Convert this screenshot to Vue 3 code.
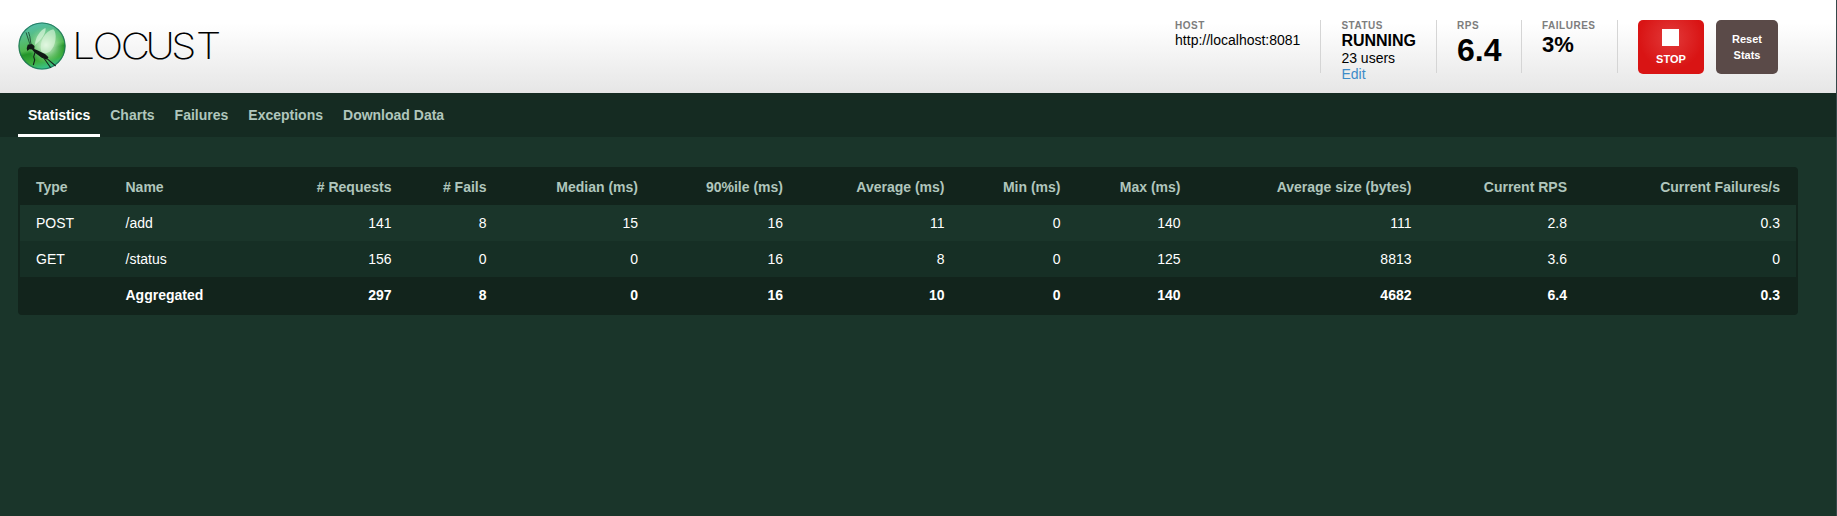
<script setup>
const tabs = ['Statistics', 'Charts', 'Failures', 'Exceptions', 'Download Data']
const columns = [
  ['Type', 89.5], ['Name', 140], ['# Requests', 158], ['# Fails', 95], ['Median (ms)', 151.5],
  ['90%ile (ms)', 145], ['Average (ms)', 161.5], ['Min (ms)', 116], ['Max (ms)', 120],
  ['Average size (bytes)', 231], ['Current RPS', 155.5], ['Current Failures/s', 213]
]
const rows = [
  ['POST', '/add', '141', '8', '15', '16', '11', '0', '140', '111', '2.8', '0.3'],
  ['GET', '/status', '156', '0', '0', '16', '8', '0', '125', '8813', '3.6', '0'],
  ['', 'Aggregated', '297', '8', '0', '16', '10', '0', '140', '4682', '6.4', '0.3']
]
</script>

<template>
  <div class="page">
    <header class="top">
      <svg class="logo" width="204" height="52" viewBox="0 0 204 52">
        <defs>
          <linearGradient id="ball" x1="0.35" y1="0" x2="0.6" y2="1">
            <stop offset="0" stop-color="#52bfae" />
            <stop offset="0.25" stop-color="#57bd83" />
            <stop offset="0.52" stop-color="#4fb64e" />
            <stop offset="0.6" stop-color="#239429" />
            <stop offset="0.8" stop-color="#3fae3f" />
            <stop offset="1" stop-color="#36c79c" />
          </linearGradient>
          <radialGradient id="glow">
            <stop offset="0" stop-color="#e8f8e6" stop-opacity="1" />
            <stop offset="0.5" stop-color="#b5e6b8" stop-opacity="0.7" />
            <stop offset="1" stop-color="#8ad890" stop-opacity="0" />
          </radialGradient>
        </defs>
        <circle cx="24" cy="26" r="23.500" fill="url(#ball)" />
        <circle cx="28" cy="25" r="18" fill="url(#glow)" />
        <circle cx="24" cy="26" r="23" fill="none" stroke="#1c6f58" stroke-width="1.200" opacity="0.8" />
        <path d="M17 25C17 18 22 10 27.500 8C28.500 13 23 20 17 25Z" fill="#d8f5dc" opacity="0.7" />
        <path d="M23 31C21 22 27 11 35.300 9.300C39.500 13 38 26 32 31.500C28 34 25 34 23 31Z" fill="#dff6e0" opacity="0.6" />
        <path d="M8.700 28.300L9.700 24.700L13.700 23.700L16.500 26L16.300 29L19.300 30.200L27 34L30.500 37.300L28.700 39.500L23.700 37.800L16.300 32.300L14 29.500L11.300 29.300L9.300 31Z" fill="#111815" />
        <path d="M12 24.500L8 12.300M13 24.500L11.800 16.500L10.500 12" fill="none" stroke="#1f4935" stroke-width="0.900" />
        <path d="M17 32.500L15.700 36.700L16.700 40L15.300 45M25.300 37.300L32.700 47.700M28.700 38.300L37.700 46" fill="none" stroke="#15231c" stroke-width="1.100" />
        <text class="wordmark" transform="scale(1.12 1)" x="48.400 66.800 91.800 113.900 136.900 158.900" y="39">LOCUST</text>
      </svg>
      <div class="stats">
        <div class="box"><div class="label">HOST</div><div class="value">http://localhost:8081</div></div>
        <div class="box"><div class="label">STATUS</div><div class="value running">RUNNING</div><div class="value users">23 users</div><a class="edit">Edit</a></div>
        <div class="box rate"><div class="label">RPS</div><div class="value rps">6.4</div></div>
        <div class="box last"><div class="label">FAILURES</div><div class="value fail">3%</div></div>
        <button class="stop"><span class="square"></span>STOP</button>
        <button class="reset">Reset<br />Stats</button>
      </div>
    </header>
    <nav class="tabs">
      <a v-for="(t, i) in tabs" :key="t" :class="{ active: i === 0 }">{{ t }}</a>
    </nav>
    <main>
      <table>
        <colgroup><col v-for="c in columns" :key="c[0]" :style="{ width: c[1] + 'px' }" /></colgroup>
        <thead><tr><th v-for="c in columns" :key="c[0]">{{ c[0] }}</th></tr></thead>
        <tbody>
          <tr v-for="(r, i) in rows" :key="i" :class="{ even: i === 1, total: i === 2 }">
            <td v-for="(v, j) in r" :key="j">{{ v }}</td>
          </tr>
        </tbody>
      </table>
    </main>
  </div>
</template>

<style>
body { margin: 0; background: #1a352a; }
</style>

<style scoped>
.page { box-sizing: border-box; height: 516px; overflow: hidden; background: #1a352a; border-right: 1px solid #36484a; font-family: "Liberation Sans", Arial, sans-serif; font-size: 14px; color: #fff; }
.top { box-sizing: border-box; height: 93px; padding: 20px 58px 0 18px; display: flex; justify-content: space-between; background: linear-gradient(#fff 0, #fff 25%, #e6e6e6 100%); color: #000; }
.logo { display: block; flex: none; }
.wordmark { font-family: Inter, sans-serif; font-weight: 200; font-size: 36px; fill: #000; }
.stats { display: flex; align-items: flex-start; }
.box { box-sizing: content-box; height: 53px; padding-right: 20px; margin-right: 20px; border-right: 1px solid #d5d5d5; white-space: nowrap; }
.box.rate { padding-right: 19.5px; }
.box.last { padding-right: 21.5px; }
.label { height: 11px; line-height: 12px; font-size: 10px; font-weight: bold; letter-spacing: .5px; color: #7d7d7d; }
.value { line-height: 18px; }
.running { font-size: 16px; font-weight: bold; line-height: 19px; }
.users { line-height: 17px; }
.edit { display: block; line-height: 15px; color: #3d8bc8; }
.rps { font-size: 32px; font-weight: bold; line-height: 38px; }
.fail { font-size: 22px; font-weight: bold; line-height: 28px; }
button { font: bold 11px/16px "Liberation Sans", Arial, sans-serif; color: #fff; border: 0; padding: 0; height: 54px; border-radius: 5px; }
.stop { width: 66px; background: radial-gradient(circle at 50% 33%, #e23a3a 0, #d91414 32px); display: flex; flex-direction: column; align-items: center; padding-top: 9px; }
.square { width: 17px; height: 17px; margin: 0 1px 5px 0; background: #fff; }
.reset { width: 62px; margin-left: 12px; background: #5a4a48; }
.tabs { display: flex; height: 44px; padding-left: 18px; background: #152b22; }
.tabs a { box-sizing: border-box; height: 44px; padding: 0 10px; line-height: 44px; font-weight: bold; color: #b0c6bc; border-bottom: 3px solid transparent; }
.tabs a.active { color: #fff; border-bottom-color: #fff; }
main { padding: 30px 38px 0 18px; }
table { box-sizing: border-box; width: 1780px; table-layout: fixed; border-collapse: separate; border-spacing: 0; border: 2px solid #12241c; border-radius: 4px; background: #12241c; }
th, td { box-sizing: border-box; height: 36px; padding: 0 16px; text-align: right; line-height: 16px; white-space: nowrap; }
th { height: 38px; padding-bottom: 2px; color: #b0c6bc; }
tbody tr.total td { height: 36px; }
th:nth-child(-n+2), td:nth-child(-n+2) { text-align: left; }
thead th { height: 36px; padding-bottom: 0; }
tbody tr { background: #1a352a; }
tbody tr.even { background: #162f25; }
tbody tr.total { background: #12241c; font-weight: bold; }
</style>
